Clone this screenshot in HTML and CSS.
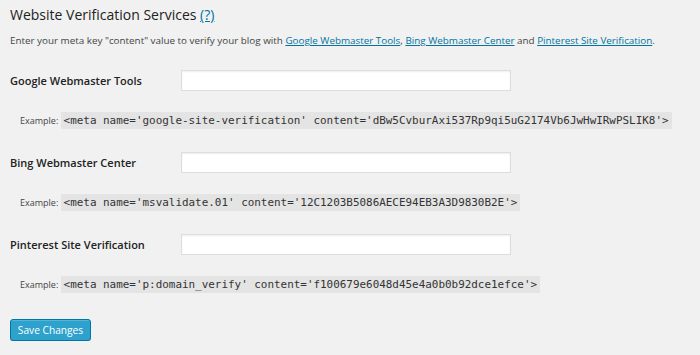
FILE: index.html
```html
<!DOCTYPE html>
<html>
<head>
<meta charset="utf-8">
<link rel="stylesheet" href="styles.css">
</head>
<body>
<div class="wrap">
  <h3 class="title">Website Verification Services <a href="#">(?)</a></h3>
  <p class="desc">Enter your meta key "content" value to verify your blog with <a href="#">Google Webmaster Tools</a>, <a href="#">Bing Webmaster Center</a> and <a href="#">Pinterest Site Verification</a>.</p>

  <div class="field">
    <div class="row">
      <label class="label">Google Webmaster Tools</label>
      <input class="input" type="text">
    </div>
    <p class="example">Example: <code class="code">&lt;meta name='google-site-verification' content='dBw5CvburAxi537Rp9qi5uG2174Vb6JwHwIRwPSLIK8'&gt;</code></p>
  </div>

  <div class="field">
    <div class="row">
      <label class="label">Bing Webmaster Center</label>
      <input class="input" type="text">
    </div>
    <p class="example">Example: <code class="code">&lt;meta name='msvalidate.01' content='12C1203B5086AECE94EB3A3D9830B2E'&gt;</code></p>
  </div>

  <div class="field">
    <div class="row">
      <label class="label">Pinterest Site Verification</label>
      <input class="input" type="text">
    </div>
    <p class="example">Example: <code class="code">&lt;meta name='p:domain_verify' content='f100679e6048d45e4a0b0b92dce1efce'&gt;</code></p>
  </div>

  <button class="btn">Save Changes</button>
</div>
</body>
</html>
```

FILE: styles.css
```css
html, body {
  margin: 0;
  padding: 0;
  background: #f1f1f1;
}
body {
  font-family: "Open Sans", "Liberation Sans", sans-serif;
  color: #444;
  font-size: 10px;
}
.wrap {
  padding: 5px 10px 0 10px;
}
.title {
  margin: 0;
  font-size: 14px;
  font-weight: 400;
  line-height: 20px;
  color: #222;
}
.title a, .desc a {
  color: #0074a2;
  text-decoration: underline;
}
.desc {
  margin: 8px 0 0 0;
  font-size: 9.85px;
  line-height: 14px;
  color: #444;
}
.field {
  margin-top: 13px;
}
.row {
  display: flex;
  align-items: center;
  height: 40px;
}
.label {
  width: 171px;
  font-weight: 600;
  font-size: 11px;
  color: #222;
}
.input {
  width: 330px;
  height: 21px;
  box-sizing: border-box;
  border: 1px solid #ddd;
  background: #fff;
  box-shadow: inset 0 1px 2px rgba(0,0,0,0.07);
  margin: 0;
  padding: 0 4px;
}
.example {
  margin: 13px 0 0 0;
  padding-left: 10px;
  font-size: 9px;
  line-height: 16px;
  color: #444;
}
.code {
  font-family: "DejaVu Sans Mono", monospace;
  font-size: 10.93px;
  background: #e4e4e4;
  padding: 2px 3px;
  color: #333;
}
.btn {
  display: block;
  margin-top: 26px;
  background: #2ea2cc;
  border: 1px solid #0074a2;
  border-radius: 3px;
  box-shadow: inset 0 1px 0 rgba(120,200,230,0.5), 0 1px 0 rgba(0,0,0,0.15);
  color: #fff;
  font-family: "Open Sans", sans-serif;
  font-size: 10.2px;
  height: 22px;
  width: 81px;
  padding: 0;
  line-height: 20px;
}
```
